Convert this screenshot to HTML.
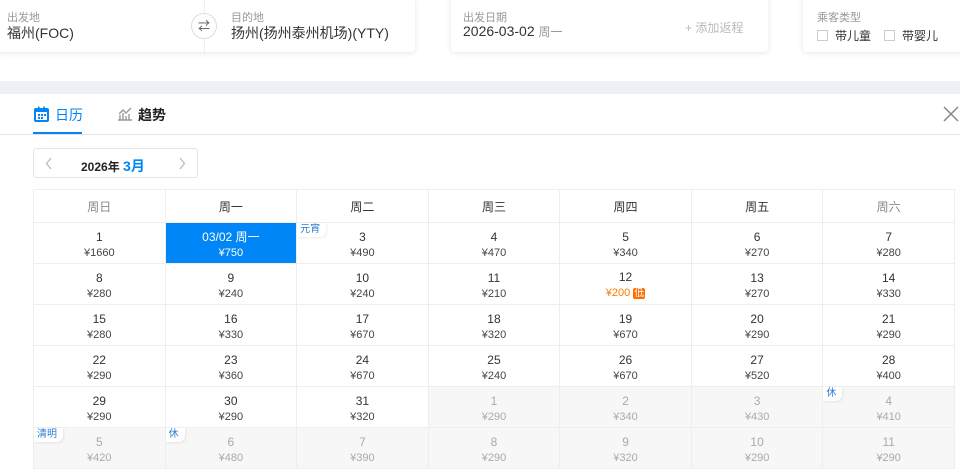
<!DOCTYPE html>
<html><head><meta charset="utf-8"><style>
*{margin:0;padding:0;box-sizing:border-box}
body{width:960px;height:475px;overflow:hidden;background:#fff;font-family:"Liberation Sans","Noto Sans CJK SC",sans-serif;position:relative;color:#333}
.card{position:absolute;top:-4px;height:56px;background:#fff;border-radius:4px;box-shadow:0 1px 6px rgba(0,0,0,.1)}
.lbl{position:absolute;font-size:11px;color:#999;top:13px}
.val{position:absolute;font-size:14px;color:#333;top:27px}
.band{position:absolute;left:0;top:81px;width:960px;height:13px;background:#edf0f4}
table{position:absolute;left:33px;top:189px;border-collapse:collapse;width:922px;table-layout:fixed}
td{border:1px solid #eee;text-align:center;height:41px;font-size:12px;color:#333;position:relative;line-height:16px;padding-top:3px}
th{border:1px solid #eee;height:33px;font-weight:normal;font-size:12px;color:#333}
td small{display:block;font-size:11px;color:#444}
td.o{background:#f7f7f7;color:#aaa}td.o small{color:#aaa}
td.sel{background:#0086f6;color:#fff}td.sel small{color:#fff}
.tag{position:absolute;left:0;top:0;font-size:10px;color:#2d7dd2;background:#fff;padding:0 6px 0 3px;line-height:14px;border-radius:0 0 6px 0;box-shadow:1px 1px 2px rgba(0,0,0,.08)}
</style></head><body>
<div class="card" style="left:-4px;width:419px">
<div class="lbl" style="left:11px">出发地</div><div class="val" style="left:11px">福州(FOC)</div>
<div style="position:absolute;left:208px;top:4px;width:1px;height:52px;background:#eee"></div>
<div style="position:absolute;left:195px;top:17px;width:26px;height:26px;border:1px solid #ddd;border-radius:50%;background:#fff;font-size:12px;text-align:center;line-height:24px;color:#555">⇄</div>
<div class="lbl" style="left:235px">目的地</div><div class="val" style="left:235px">扬州(扬州泰州机场)(YTY)</div>
</div>
<div class="card" style="left:451px;width:317px">
<div class="lbl" style="left:12px">出发日期</div><div class="val" style="left:12px">2026-03-02 <span style="font-size:12px;color:#999">周一</span></div>
<div style="position:absolute;left:234px;top:23px;font-size:12px;color:#bbb">+ 添加返程</div>
</div>
<div class="card" style="left:803px;width:170px">
<div class="lbl" style="left:14px">乘客类型</div>
<div style="position:absolute;left:14px;top:31px;font-size:12px;color:#333;display:flex;align-items:center">
<span style="width:11px;height:11px;border:1px solid #ccc;display:inline-block;margin-right:7px"></span>带儿童
<span style="width:11px;height:11px;border:1px solid #ccc;display:inline-block;margin:0 7px 0 13px"></span>带婴儿</div>
</div>
<div class="band"></div>
<div style="position:absolute;left:0;top:134px;width:960px;height:1px;background:#e4e4e4"></div>
<div style="position:absolute;left:33px;top:132px;width:49px;height:2px;background:#0086f6"></div>
<svg style="position:absolute;left:34px;top:106px" width="15" height="16" viewBox="0 0 15 16"><rect x="1" y="3" width="13" height="12" rx="1" fill="none" stroke="#0086f6" stroke-width="2"/><rect x="1" y="3" width="13" height="3" fill="#0086f6"/><rect x="4" y="0.5" width="1.6" height="4" fill="#0086f6"/><rect x="9.4" y="0.5" width="1.6" height="4" fill="#0086f6"/><g fill="#0086f6"><rect x="4" y="8" width="2" height="2"/><rect x="7" y="8" width="2" height="2"/><rect x="10" y="8" width="2" height="2"/><rect x="4" y="11" width="2" height="2"/><rect x="7" y="11" width="2" height="2"/></g></svg>
<div style="position:absolute;left:55px;top:105px;font-size:14px;color:#0086f6">日历</div>
<svg style="position:absolute;left:117px;top:106px" width="16" height="15" viewBox="0 0 16 15"><path d="M1 14h14M3 14V9M6 14V7M9 14V10M12 14V8M2 8l4-4 3 3 5-5" fill="none" stroke="#999" stroke-width="1.4"/></svg>
<div style="position:absolute;left:138px;top:105px;font-size:14px;color:#222;font-weight:bold">趋势</div>
<svg style="position:absolute;left:943px;top:106px" width="16" height="16"><path d="M1 1L15 15M15 1L1 15" stroke="#888" stroke-width="1.5"/></svg>
<div style="position:absolute;left:33px;top:148px;width:165px;height:30px;border:1px solid #e4e4e4;border-radius:3px">
<svg style="position:absolute;left:11px;top:8px" width="8" height="13"><path d="M6 1L1.5 6.5L6 12" fill="none" stroke="#bbb" stroke-width="1.3"/></svg>
<span style="position:absolute;left:47px;top:7px;font-size:12px;font-weight:bold;color:#222">2026年 <span style="color:#0086f6;font-size:14px">3月</span></span>
<svg style="position:absolute;left:144px;top:8px" width="8" height="13"><path d="M2 1L6.5 6.5L2 12" fill="none" stroke="#bbb" stroke-width="1.3"/></svg>
</div>
<table>
<tr><th style="color:#888">周日</th><th>周一</th><th>周二</th><th>周三</th><th>周四</th><th>周五</th><th style="color:#888">周六</th></tr>
<tr><td>1<small>¥1660</small></td><td class="sel">03/02 周一<small>¥750</small></td><td><span class="tag">元宵</span>3<small>¥490</small></td><td>4<small>¥470</small></td><td>5<small>¥340</small></td><td>6<small>¥270</small></td><td>7<small>¥280</small></td></tr>
<tr><td>8<small>¥280</small></td><td>9<small>¥240</small></td><td>10<small>¥240</small></td><td>11<small>¥210</small></td><td>12<small style="color:#ff7700">¥200 <span style="background:#ff6f00;color:#fff;font-size:10px;padding:0 1px;border-radius:2px">低</span></small></td><td>13<small>¥270</small></td><td>14<small>¥330</small></td></tr>
<tr><td>15<small>¥280</small></td><td>16<small>¥330</small></td><td>17<small>¥670</small></td><td>18<small>¥320</small></td><td>19<small>¥670</small></td><td>20<small>¥290</small></td><td>21<small>¥290</small></td></tr>
<tr><td>22<small>¥290</small></td><td>23<small>¥360</small></td><td>24<small>¥670</small></td><td>25<small>¥240</small></td><td>26<small>¥670</small></td><td>27<small>¥520</small></td><td>28<small>¥400</small></td></tr>
<tr><td>29<small>¥290</small></td><td>30<small>¥290</small></td><td>31<small>¥320</small></td><td class="o">1<small>¥290</small></td><td class="o">2<small>¥340</small></td><td class="o">3<small>¥430</small></td><td class="o"><span class="tag">休</span>4<small>¥410</small></td></tr>
<tr><td class="o"><span class="tag">清明</span>5<small>¥420</small></td><td class="o"><span class="tag">休</span>6<small>¥480</small></td><td class="o">7<small>¥390</small></td><td class="o">8<small>¥290</small></td><td class="o">9<small>¥320</small></td><td class="o">10<small>¥290</small></td><td class="o">11<small>¥290</small></td></tr>
</table>
</body></html>
